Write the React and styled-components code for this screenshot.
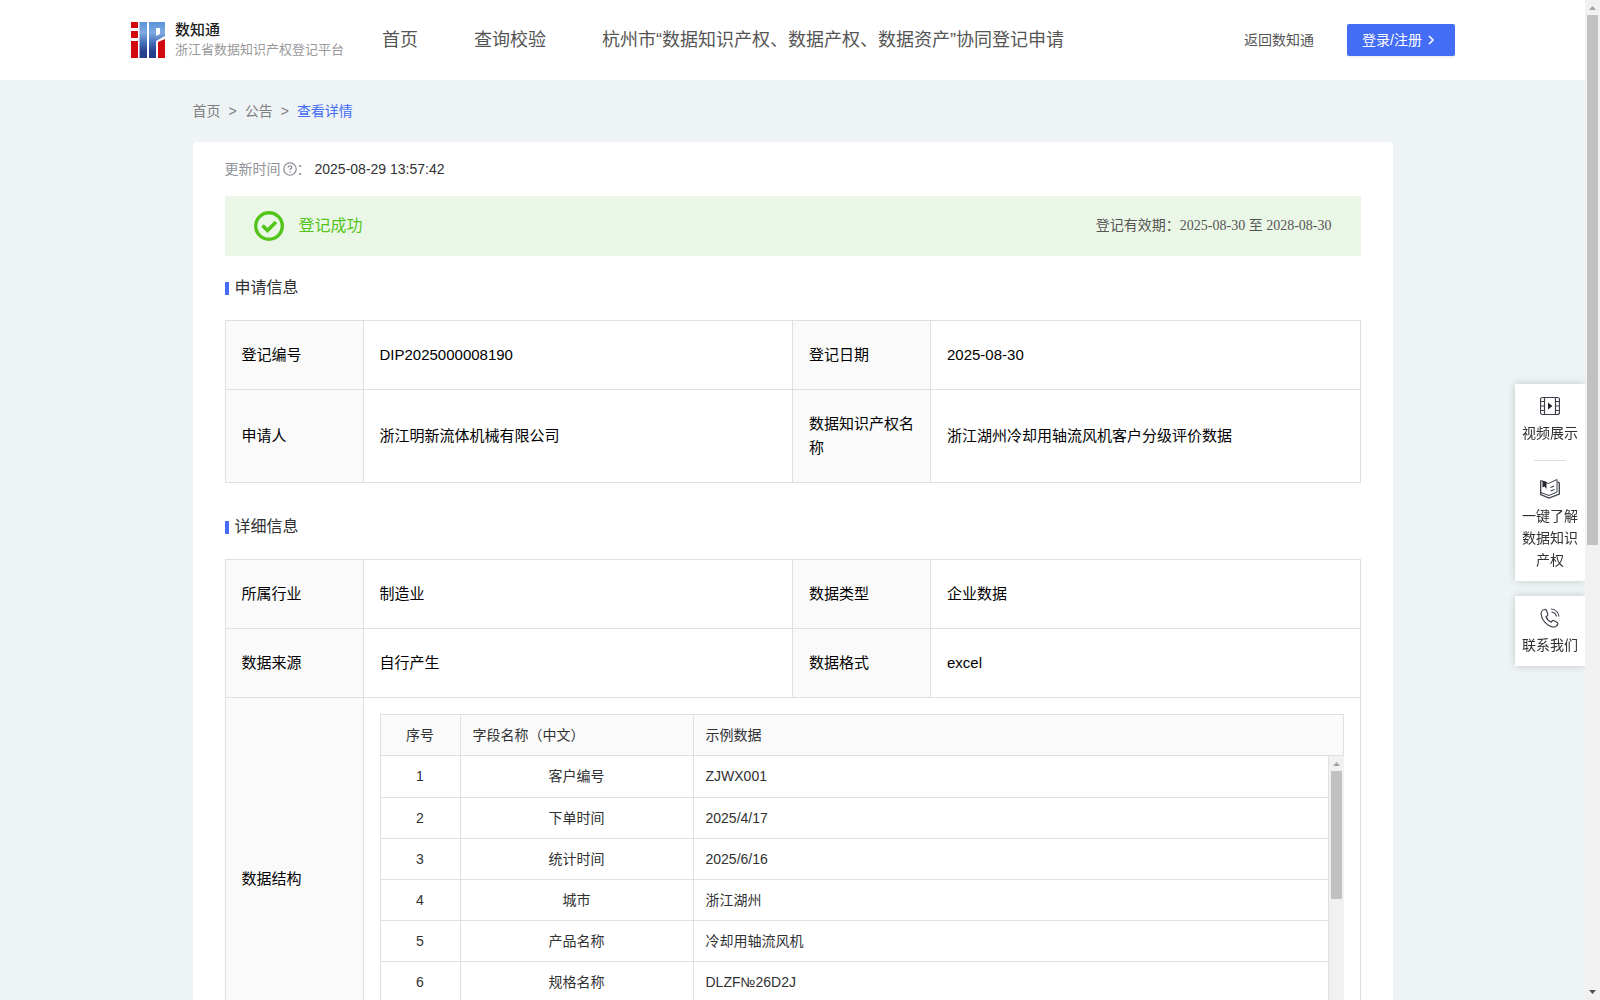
import React from "react";
import styled, { createGlobalStyle, css } from "styled-components";

const sans = `"Liberation Sans", "Noto Sans CJK SC", sans-serif`;
const line = "#e0e0e0";
const primary = "#446df6";

const GlobalStyle = createGlobalStyle`
  *, *::before, *::after { box-sizing: border-box; }
  body { margin: 0; font-family: ${sans}; font-size: 14px; line-height: 22px; color: #303133; }
  a { color: inherit; text-decoration: none; }
  h1, h2, p, ul, ol { margin: 0; padding: 0; font-weight: 400; }
  ul, ol { list-style: none; }
  svg { display: block; flex: none; }
`;

const Shell = styled.div`
  display: flex;
  height: 100vh;
  background: #eef3f6;
`;

const Page = styled.div`
  flex: 1;
  min-width: 0;
  overflow-y: auto;
  scrollbar-width: none;
`;

const Header = styled.header`
  display: flex;
  align-items: center;
  height: 80px;
  padding: 0 130px 0 131px;
  background: #fff;
  white-space: nowrap;
`;

const Brand = styled.a`
  display: flex;
  align-items: center;
  gap: 10px;
  width: 251px;
`;

const BrandText = styled.span`
  display: flex;
  flex-direction: column;
  line-height: 20px;
  font-size: 13px;
  color: #999;
`;

const BrandName = styled.strong`
  font-size: 15px;
  font-weight: 500;
  color: #222;
`;

const Nav = styled.nav`
  display: flex;
  flex: 1;
  gap: 56px;
  font-size: 18px;
  color: #555;
`;

const BackLink = styled.a`
  margin-right: 33px;
  color: #555;
`;

const LoginButton = styled.button`
  display: flex;
  align-items: center;
  gap: 2px;
  width: 108px;
  height: 32px;
  padding: 0 15px;
  border: 0;
  border-radius: 2px;
  background: ${primary};
  box-shadow: 0 2px 0 rgba(0, 0, 0, 0.05);
  color: #fff;
  font: inherit;
  cursor: pointer;
`;

const Main = styled.main`
  max-width: 1200px;
  margin: 0 auto;
`;

const Crumbs = styled.ol`
  display: flex;
  gap: 8px;
  padding: 20px 0;
  color: #808080;
`;

const CurrentCrumb = styled.a`
  color: ${primary};
`;

const Card = styled.section`
  padding: 16px 32px 32px;
  border-radius: 4px 4px 0 0;
  background: #fff;
`;

const Updated = styled.p`
  display: flex;
  align-items: center;
  margin-bottom: 16px;
  color: #909399;
`;

const HelpIcon = styled.svg`
  margin-left: 2px;
`;

const UpdatedTime = styled.time`
  margin-left: 4px;
  color: #303133;
`;

const Banner = styled.div`
  display: flex;
  align-items: center;
  gap: 15px;
  height: 60px;
  padding: 0 29px;
  background: #ebf7e6;
`;

const BannerTitle = styled.h1`
  flex: 1;
  font-size: 16px;
  color: #52c41a;
`;

const Validity = styled.p`
  font-family: "Liberation Serif", "Noto Sans CJK SC", serif;
  color: #555;
`;

const SectionTitle = styled.h2`
  display: flex;
  align-items: center;
  gap: 6px;
  margin: 20px 0;
  font-size: 16px;
  line-height: 24px;

  &::before {
    content: "";
    width: 4px;
    height: 13px;
    background: ${primary};
  }
`;

const InfoTable = styled.table`
  width: 100%;
  margin-bottom: 32px;
  border-collapse: collapse;
  table-layout: fixed;
  font-size: 15px;
  line-height: 24px;
  color: #000;
`;

const infoCell = css`
  padding: 22px 16px;
  border: 1px solid ${line};
  text-align: left;
  font-weight: 400;
`;

const InfoLabel = styled.th`
  ${infoCell}
  background: #fafafa;
`;

const InfoValue = styled.td`
  ${infoCell}
`;

const StructureCell = styled.td`
  padding: 16px;
  border: 1px solid ${line};
`;

const LabelCol = styled.col`
  width: 138px;
`;

const IndexCol = styled.col`
  width: 80px;
`;

const NameCol = styled.col`
  width: 233px;
`;

const FieldTable = styled.table`
  width: 100%;
  border-collapse: collapse;
  table-layout: fixed;
  font-size: 14px;
  line-height: 22px;
  color: #303133;
`;

const fieldCell = css`
  height: 41px;
  padding: 0 12px;
  border: 1px solid ${line};
  font-weight: 400;
  text-align: ${(p) => (p.$center ? "center" : "left")};
`;

const FieldHead = styled.th`
  ${fieldCell}
  background: #fafafa;
`;

const FieldCell = styled.td`
  ${fieldCell}
  border-top: 0;
`;

const FieldBody = styled.div`
  display: flex;
  height: 287px;
`;

const FieldScroller = styled.div`
  flex: 1;
  overflow-y: auto;
  scrollbar-width: none;
`;

const Rail = styled.div`
  display: flex;
  flex: none;
  flex-direction: column;
  justify-content: space-between;
  width: 15px;
  padding: 0 2px;
  background: #f1f1f1;
`;

const Thumb = styled.div`
  flex: 0 0 ${(p) => p.$size};
  margin-bottom: auto;
  background: #c1c1c1;
`;

const RailArrow = styled.svg`
  width: 11px;
  height: 15px;
  fill: ${(p) => (p.$active ? "#505050" : "#a3a3a3")};
`;

const Floating = styled.aside`
  position: fixed;
  top: 384px;
  right: 15px;
  display: grid;
  gap: 15px;
  width: 70px;
`;

const FloatCard = styled.div`
  background: #fff;
  box-shadow: 0 0 8px rgba(0, 0, 0, 0.18);
  clip-path: inset(-10px 0 -10px -10px);
`;

const FloatLink = styled.a`
  display: flex;
  flex-direction: column;
  align-items: center;
  gap: 6px;
  padding: 12px 7px 10px;
  text-align: center;
`;

const FloatRule = styled.hr`
  width: 32px;
  height: 1px;
  margin: 6px auto;
  border: 0;
  background: #ddd;
`;

const Logo = () => (
  <svg width="34" height="36" viewBox="0 0 34 36" aria-hidden="true">
    <defs>
      <linearGradient id="logoBlue" x1="0" y1="0" x2="0" y2="36" gradientUnits="userSpaceOnUse">
        <stop offset="0" stopColor="#5b93d8" />
        <stop offset="0.3" stopColor="#7fa9e0" />
        <stop offset="0.55" stopColor="#4a74bd" />
        <stop offset="0.8" stopColor="#2b4592" />
        <stop offset="1" stopColor="#263d88" />
      </linearGradient>
    </defs>
    <g fill="#d20a10">
      <path d="M0 0h7v6H0zM0 9h7v7H0zM0 19h7v17H0zM27 20l7-3v19h-7z" />
    </g>
    <g fill="url(#logoBlue)">
      <path d="M8.500 0h7.500v36H8.500z" />
      <path fillRule="evenodd" d="M18 0h16v14l-9 5v17h-7zM25 6v8l4-2V6z" />
    </g>
  </svg>
);

const VideoIcon = () => (
  <svg width="20" height="20" viewBox="0 0 20 20" fill="none" stroke="#3c3f4a" aria-hidden="true">
    <rect x="0.5" y="1.5" width="19" height="17" rx="2" strokeWidth="1.200" />
    <path d="M4.500 1.500v17M15.500 1.500v17" strokeWidth="1.200" />
    <path d="M0.500 5.500h4M0.500 10h4M0.500 14.500h4M15.500 5.500h4M15.500 10h4M15.500 14.500h4" />
    <path d="M8 6.500l4.500 3.500L8 13.500z" fill="#222530" stroke="none" />
  </svg>
);

const BookIcon = () => (
  <svg width="20" height="20" viewBox="0 0 20 20" fill="none" stroke="#3c3f4a" aria-hidden="true">
    <path d="M0.700 1.500V15.500L9 19l10.300-4V4l-1.800-1" strokeWidth="1.300" />
    <path d="M0.700 1.500L8.500 4.500l8.500-4v12.500L9 16.500L0.700 13.500" />
    <path d="M10.500 8.500l3.500-1.500M10.500 12l4-1.500" strokeWidth="1.200" />
    <path d="M2.500 1.500l4 1.500v7L4.500 7.500l-2 1z" fill="#222530" stroke="none" />
  </svg>
);

const PhoneIcon = () => (
  <svg width="20" height="20" viewBox="0 0 20 20" fill="none" stroke="#3c3f4a" strokeWidth="1.200" aria-hidden="true">
    <path d="M4.500 1.500C2 2 .8 4.500 1.200 7c.8 5 5.500 10.500 11 11.800 2.500.6 5-.6 5.600-2.800.2-.8-.2-1.400-.9-1.800l-2.800-1.500c-.7-.4-1.500-.2-2 .4l-.8 1c-2-.7-4.500-3.200-5.200-5.400l1.200-1c.6-.5.7-1.200.4-1.900L6.500 2.400c-.4-.8-1.200-1.100-2-.9z" />
    <path d="M11 1c4.500.2 7.500 3.500 8 7.500M11.500 4c3 .4 4.500 2 5 4.500" />
  </svg>
);

const ScrollRail = ({ thumb, showEnd }) => (
  <Rail aria-hidden="true">
    <RailArrow viewBox="0 0 11 15">
      <path d="M2 10h7L5.500 6z" />
    </RailArrow>
    <Thumb $size={thumb} />
    {showEnd && (
      <RailArrow $active viewBox="0 0 11 15">
        <path d="M2 5h7L5.500 9z" />
      </RailArrow>
    )}
  </Rail>
);

const InfoCols = () => (
  <colgroup>
    <LabelCol />
    <col />
    <LabelCol />
    <col />
  </colgroup>
);

const FieldCols = () => (
  <colgroup>
    <IndexCol />
    <NameCol />
    <col />
  </colgroup>
);

const InfoRow = ({ cells }) => (
  <tr>
    {cells.map(([label, value]) => (
      <React.Fragment key={label}>
        <InfoLabel scope="row">{label}</InfoLabel>
        <InfoValue>{value}</InfoValue>
      </React.Fragment>
    ))}
  </tr>
);

const application = [
  [["登记编号", "DIP2025000008190"], ["登记日期", "2025-08-30"]],
  [["申请人", "浙江明新流体机械有限公司"], ["数据知识产权名称", "浙江湖州冷却用轴流风机客户分级评价数据"]],
];

const details = [
  [["所属行业", "制造业"], ["数据类型", "企业数据"]],
  [["数据来源", "自行产生"], ["数据格式", "excel"]],
];

const fields = [
  ["客户编号", "ZJWX001"],
  ["下单时间", "2025/4/17"],
  ["统计时间", "2025/6/16"],
  ["城市", "浙江湖州"],
  ["产品名称", "冷却用轴流风机"],
  ["规格名称", "DLZF№26D2J"],
];

export default function App() {
  return (
    <Shell>
      <GlobalStyle />
      <Page>
        <Header>
          <Brand href="#">
            <Logo />
            <BrandText>
              <BrandName>数知通</BrandName>
              浙江省数据知识产权登记平台
            </BrandText>
          </Brand>
          <Nav>
            <a href="#">首页</a>
            <a href="#">查询校验</a>
            <a href="#">杭州市“数据知识产权、数据产权、数据资产”协同登记申请</a>
          </Nav>
          <BackLink href="#">返回数知通</BackLink>
          <LoginButton type="button">
            登录/注册
            <svg width="14" height="14" viewBox="0 0 14 14" fill="none" stroke="#fff" strokeWidth="1.500" aria-hidden="true">
              <path d="M5 3l4 4-4 4" />
            </svg>
          </LoginButton>
        </Header>

        <Main>
          <Crumbs>
            <li><a href="#">首页</a></li>
            <li aria-hidden="true">&gt;</li>
            <li><a href="#">公告</a></li>
            <li aria-hidden="true">&gt;</li>
            <li><CurrentCrumb href="#">查看详情</CurrentCrumb></li>
          </Crumbs>

          <Card>
            <Updated>
              更新时间
              <HelpIcon width="14" height="14" viewBox="0 0 14 14" fill="none" stroke="#909399" strokeWidth="1.300" aria-hidden="true">
                <circle cx="7" cy="7" r="6.200" />
                <path d="M5.200 5.600c0-1.100.8-1.800 1.800-1.800s1.800.7 1.800 1.600c0 1.200-1.800 1.300-1.800 2.700M7 9.200v1.200" />
              </HelpIcon>
              ：
              <UpdatedTime>2025-08-29 13:57:42</UpdatedTime>
            </Updated>

            <Banner>
              <svg width="30" height="30" viewBox="0 0 30 30" fill="none" stroke="#52c41a" aria-hidden="true">
                <circle cx="15" cy="15" r="13.300" strokeWidth="3.400" />
                <path d="M8.500 14.500l5 5 8.500-8.500" strokeWidth="3.600" />
              </svg>
              <BannerTitle>登记成功</BannerTitle>
              <Validity>登记有效期：2025-08-30 至 2028-08-30</Validity>
            </Banner>

            <SectionTitle>申请信息</SectionTitle>
            <InfoTable>
              <InfoCols />
              <tbody>
                {application.map((cells) => <InfoRow key={cells[0][0]} cells={cells} />)}
              </tbody>
            </InfoTable>

            <SectionTitle>详细信息</SectionTitle>
            <InfoTable>
              <InfoCols />
              <tbody>
                {details.map((cells) => <InfoRow key={cells[0][0]} cells={cells} />)}
                <tr>
                  <InfoLabel scope="row">数据结构</InfoLabel>
                  <StructureCell colSpan={3}>
                    <FieldTable>
                      <FieldCols />
                      <thead>
                        <tr>
                          <FieldHead $center>序号</FieldHead>
                          <FieldHead>字段名称（中文）</FieldHead>
                          <FieldHead>示例数据</FieldHead>
                        </tr>
                      </thead>
                    </FieldTable>
                    <FieldBody>
                      <FieldScroller>
                        <FieldTable>
                          <FieldCols />
                          <tbody>
                            {fields.map(([name, sample], i) => (
                              <tr key={name}>
                                <FieldCell $center>{i + 1}</FieldCell>
                                <FieldCell $center>{name}</FieldCell>
                                <FieldCell>{sample}</FieldCell>
                              </tr>
                            ))}
                          </tbody>
                        </FieldTable>
                      </FieldScroller>
                      <ScrollRail thumb="128px" />
                    </FieldBody>
                  </StructureCell>
                </tr>
              </tbody>
            </InfoTable>
          </Card>
        </Main>
      </Page>

      <ScrollRail thumb="53%" showEnd />

      <Floating>
        <FloatCard>
          <FloatLink href="#">
            <VideoIcon />
            视频展示
          </FloatLink>
          <FloatRule />
          <FloatLink href="#">
            <BookIcon />
            一键了解数据知识产权
          </FloatLink>
        </FloatCard>
        <FloatCard>
          <FloatLink href="#">
            <PhoneIcon />
            联系我们
          </FloatLink>
        </FloatCard>
      </Floating>
    </Shell>
  );
}
